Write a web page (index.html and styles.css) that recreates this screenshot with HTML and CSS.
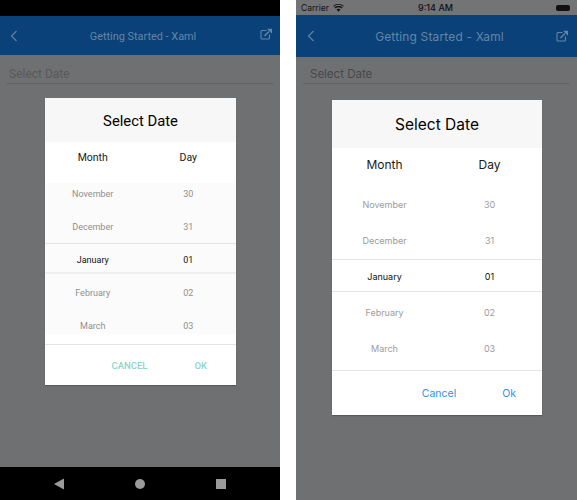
FILE: index.html
```html
<!DOCTYPE html>
<html lang="en">
<head>
  <meta charset="UTF-8" />
  <title>Date Picker - Getting Started</title>
  <link rel="stylesheet" href="styles.css">
</head>
<body>

  <!-- Android -->
  <section class="phone android">
    <div class="status-bar"></div>
    <header class="nav-bar">
      <svg class="nav-back" width="8" height="12" viewBox="0 0 8 12"><path d="M6.5 1L1.5 6l5 5" fill="none" stroke="currentColor" stroke-width="1.1"/></svg>
      <span class="nav-title">Getting Started - Xaml</span>
      <svg class="nav-link" width="12" height="12" viewBox="0 0 12 12"><path d="M6.500 2.500H2a1 1 0 0 0-1 1V10a1 1 0 0 0 1 1h6.500a1 1 0 0 0 1-1V6.500" fill="none" stroke="currentColor" stroke-width="1.1"/><path d="M4.500 8L9 3.500" fill="none" stroke="currentColor" stroke-width="1.500"/><path d="M7 .8h5v5z" fill="currentColor"/></svg>
    </header>
    <main class="content">
      <div class="date-field">Select Date</div>
      <div class="dialog">
        <div class="dialog-title">Select Date</div>
        <div class="col-heads"><span>Month</span><span>Day</span></div>
        <div class="wheel">
          <div class="row"><span>November</span><span>30</span></div>
          <div class="row"><span>December</span><span>31</span></div>
          <div class="row selected"><span>January</span><span>01</span></div>
          <div class="row"><span>February</span><span>02</span></div>
          <div class="row"><span>March</span><span>03</span></div>
        </div>
        <div class="dialog-buttons">
          <button type="button" class="btn-cancel">CANCEL</button>
          <button type="button" class="btn-ok">OK</button>
        </div>
      </div>
    </main>
    <footer class="soft-keys">
      <svg width="10" height="12" viewBox="0 0 10 12"><path d="M10 .5v11L0 6z" fill="#9a9a9a"/></svg>
      <span class="key-home"></span>
      <span class="key-recent"></span>
    </footer>
  </section>

  <!-- iOS -->
  <section class="phone ios">
    <div class="status-bar">
      <span class="carrier">Carrier
        <svg width="11" height="8" viewBox="0 0 12 9"><path d="M6 8.6L3.800 6.200C5 5.200 7 5.200 8.200 6.200z" fill="#111"/><path d="M2.600 5C4.600 3.300 7.400 3.300 9.400 5L10.500 3.800C7.900 1.600 4.100 1.600 1.500 3.800z" fill="#111"/><path d="M.8 3C4 .2 8 .2 11.200 3L12 2.200C8.500-.8 3.500-.8 0 2.200z" fill="#111"/></svg>
      </span>
      <span class="clock">9:14 AM</span>
      <span class="battery"></span>
    </div>
    <header class="nav-bar">
      <svg class="nav-back" width="8" height="12" viewBox="0 0 8 12"><path d="M6.5 1L1.5 6l5 5" fill="none" stroke="currentColor" stroke-width="1.1"/></svg>
      <span class="nav-title">Getting Started - Xaml</span>
      <svg class="nav-link" width="12" height="12" viewBox="0 0 12 12"><path d="M6.500 2.500H2a1 1 0 0 0-1 1V10a1 1 0 0 0 1 1h6.500a1 1 0 0 0 1-1V6.500" fill="none" stroke="currentColor" stroke-width="1.1"/><path d="M4.500 8L9 3.500" fill="none" stroke="currentColor" stroke-width="1.500"/><path d="M7 .8h5v5z" fill="currentColor"/></svg>
    </header>
    <main class="content">
      <div class="date-field">Select Date</div>
      <div class="dialog">
        <div class="dialog-title">Select Date</div>
        <div class="col-heads"><span>Month</span><span>Day</span></div>
        <div class="wheel">
          <div class="row"><span>November</span><span>30</span></div>
          <div class="row"><span>December</span><span>31</span></div>
          <div class="row selected"><span>January</span><span>01</span></div>
          <div class="row"><span>February</span><span>02</span></div>
          <div class="row"><span>March</span><span>03</span></div>
        </div>
        <div class="dialog-buttons">
          <button type="button" class="btn-cancel">Cancel</button>
          <button type="button" class="btn-ok">Ok</button>
        </div>
      </div>
    </main>
  </section>

</body>
</html>
```

FILE: styles.css
```css
* { box-sizing: border-box; }

body {
  margin: 0;
  width: 577px;
  height: 500px;
  background: white;
  display: flex;
  justify-content: space-between;
  overflow: hidden;
}

.phone {
  height: 500px;
  display: flex;
  flex-direction: column;
}

.android { width: 280px; font-family: Roboto, sans-serif; }
.ios { width: 281px; font-family: Inter, "Liberation Sans", sans-serif; }

.status-bar { flex: none; }
.android .status-bar { height: 16px; background: black; }

.ios .status-bar {
  height: 15px;
  background: #737475;
  padding: 0 7px 0 5px;
  display: grid;
  grid-template-columns: 1fr auto 1fr;
  align-items: center;
  font-size: 8.5px;
  color: #111;
}

.carrier { display: flex; align-items: center; gap: 4px; }
.clock { font-size: 9px; font-weight: 500; }

.battery {
  justify-self: end;
  width: 14px;
  height: 6px;
  background: #111;
  border-radius: 2px;
}

.nav-bar {
  flex: none;
  display: flex;
  align-items: center;
  justify-content: space-between;
  background: #0a4178;
  color: #6585a5;
}

.nav-title { margin-left: 8px; }

.android .nav-bar { height: 39px; padding: 0 8px 0 10px; font-size: 10.9px; }
.android .nav-title { margin-top: 1px; }
.android .nav-link { margin-top: -3px; }
.ios .nav-bar { height: 42px; padding: 0 9px 0 11px; font-size: 11.9px; letter-spacing: 0.2px; }

.content {
  flex: 1;
  position: relative;
  background: #6f7072;
}

.date-field { border-bottom: 1px solid #636466; }

.android .date-field { margin: 0 6px; padding: 12px 3px 0; height: 29px; font-size: 12px; color: #58595b; }
.ios .date-field { margin: 0 7px; padding: 10px 7px 0; height: 27px; font-size: 11.5px; color: #47484a; }

.dialog {
  position: absolute;
  background: white;
  color: #1a1a1a;
  display: flex;
  flex-direction: column;
  box-shadow: 0 1px 1px rgba(0,0,0,0.2);
}

.android .dialog { left: 45px; top: 43px; width: 191px; height: 287px; }
.ios .dialog { left: 36px; top: 43px; width: 210px; height: 315px; }

.dialog-title {
  background: #f7f7f7;
  display: flex;
  align-items: center;
  justify-content: center;
  color: black;
}

.android .dialog-title { height: 44px; padding-top: 1px; font-size: 14.8px; }
.ios .dialog-title { height: 48px; font-size: 15.5px; }

.col-heads, .row {
  display: grid;
  grid-template-columns: 1fr 1fr;
  align-items: center;
  text-align: center;
}

.android .col-heads { height: 41px; padding-bottom: 11px; font-size: 10.5px; }
.ios .col-heads { height: 39px; padding-bottom: 7px; font-size: 12px; }

.wheel { overflow: hidden; color: #8f8f8f; font-size: 9px; }
.android .wheel { height: 151px; margin-bottom: 10px; background: #fbfbfb; }
.android .row:first-child { margin-top: -6px; }
.ios .wheel { height: 183px; color: #9c9c9c; }

.android .row { height: 33px; padding-top: 1px; }
.ios .row { height: 36px; padding-bottom: 1px; }

.row.selected {
  color: #111;
  border-top: 1px solid #e3e3e3;
  border-bottom: 1px solid #e3e3e3;
}

/* the band is a bit shorter than the row and the text sits low in it */
.android .row.selected {
  height: 31px;
  padding-top: 3px;
  margin-bottom: 2px;
  border-bottom: 2px solid #f0f0f0;
}

.ios .row.selected {
  height: 33px;
  padding: 2px 0 0;
  margin-bottom: 3px;
}

.dialog-buttons {
  flex: 1;
  display: flex;
  justify-content: flex-end;
  align-items: center;
  border-top: 1px solid #e3e3e3;
}

.dialog-buttons button {
  background: none;
  border: none;
  padding: 0;
  font-family: inherit;
  cursor: pointer;
}

.android .dialog-buttons { padding-right: 29px; gap: 47px; }
.android .dialog-buttons button { color: #8ad6cc; font-size: 9.5px; font-weight: 500; }
.ios .dialog-buttons { padding-right: 26px; gap: 46px; }
.ios .dialog-buttons button { color: #2f8fee; font-size: 10.5px; }

.soft-keys {
  flex: none;
  height: 33px;
  background: black;
  display: flex;
  align-items: center;
  justify-content: center;
  gap: 71px;
}

.key-home { width: 10px; height: 10px; border-radius: 50%; background: #9a9a9a; }
.key-recent { width: 10px; height: 10px; background: #9a9a9a; }
```
